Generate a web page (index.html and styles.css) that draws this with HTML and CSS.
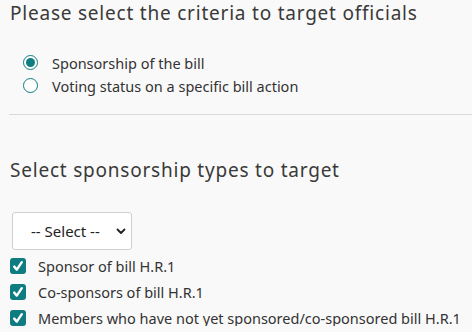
FILE: index.html
```html
<!DOCTYPE html>
<html>
<head>
<meta charset="utf-8">
<link rel="stylesheet" href="styles.css">
</head>
<body>
<main class="page">
  <h2 class="title">Please select the criteria to target officials</h2>
  <div class="radios">
    <label class="radio-row"><span class="radio checked"></span><span class="label">Sponsorship of the bill</span></label>
    <label class="radio-row"><span class="radio"></span><span class="label">Voting status on a specific bill action</span></label>
  </div>
  <hr class="divider">
  <h2 class="title title-second">Select sponsorship types to target</h2>
  <div class="select-box">
    <span class="select-text">-- Select --</span>
    <svg class="chev" width="10" height="7" viewBox="0 0 10 7"><path d="M1.5 1.5 L5 5 L8.5 1.5" fill="none" stroke="#222" stroke-width="1.8" stroke-linecap="round" stroke-linejoin="round"/></svg>
  </div>
  <div class="checks">
    <label class="check-row"><span class="check"><svg width="16" height="16" viewBox="0 0 16 16"><path d="M4.2 8.6 L6.8 11.6 L11.8 4.2" fill="none" stroke="#fff" stroke-width="2.4" stroke-linecap="round" stroke-linejoin="round"/></svg></span><span class="label">Sponsor of bill H.R.1</span></label>
    <label class="check-row"><span class="check"><svg width="16" height="16" viewBox="0 0 16 16"><path d="M4.2 8.6 L6.8 11.6 L11.8 4.2" fill="none" stroke="#fff" stroke-width="2.4" stroke-linecap="round" stroke-linejoin="round"/></svg></span><span class="label">Co-sponsors of bill H.R.1</span></label>
    <label class="check-row"><span class="check"><svg width="16" height="16" viewBox="0 0 16 16"><path d="M4.2 8.6 L6.8 11.6 L11.8 4.2" fill="none" stroke="#fff" stroke-width="2.4" stroke-linecap="round" stroke-linejoin="round"/></svg></span><span class="label">Members who have not yet sponsored/co-sponsored bill H.R.1</span></label>
  </div>
</main>
</body>
</html>
```

FILE: styles.css
```css
html, body {
  margin: 0;
  padding: 0;
  background: #f9f9f9;
}
body {
  font-family: "Noto Sans", "DejaVu Sans", sans-serif;
  color: #333;
}
.page {
  padding: 0 0 0 10px;
}
.title {
  margin: 0;
  font-size: 19px;
  font-weight: 400;
  line-height: 26px;
  letter-spacing: 0.78px;
  color: #3a3a3a;
}
.radios {
  display: flex;
  flex-direction: column;
  gap: 8px;
  padding: 29px 0 0 13px;
}
.radio-row {
  display: flex;
  align-items: center;
  gap: 14px;
  height: 15px;
}
.radio {
  width: 15px;
  height: 15px;
  box-sizing: border-box;
  border: 1.5px solid #0e7c80;
  border-radius: 50%;
  background: #fff;
  display: flex;
  align-items: center;
  justify-content: center;
}
.radio.checked::after {
  content: "";
  width: 9px;
  height: 9px;
  border-radius: 50%;
  background: #0e7c80;
}
.label {
  font-size: 14.5px;
  color: #333;
  letter-spacing: 0;
}
.divider {
  margin: 21px 0 0 -1px;
  border: 0;
  border-top: 1px solid #d9d9d9;
  height: 0;
}
.title-second {
  margin-top: 42px;
}
.select-box {
  margin: 29px 0 0 2px;
  width: 120px;
  height: 38px;
  box-sizing: border-box;
  border: 1px solid #cfcfcf;
  border-radius: 3px;
  background: #fff;
  display: flex;
  align-items: center;
  padding: 0 5px 0 18px;
  justify-content: space-between;
}
.select-text {
  font-size: 15px;
  color: #222;
}
.checks {
  display: flex;
  flex-direction: column;
  gap: 10px;
  padding-top: 8px;
}
.check-row {
  display: flex;
  align-items: center;
  gap: 12px;
  height: 16px;
}
.check {
  width: 16px;
  height: 16px;
  border-radius: 3px;
  background: #0e7c80;
  display: block;
  flex: none;
}
.check svg {
  display: block;
}
```
